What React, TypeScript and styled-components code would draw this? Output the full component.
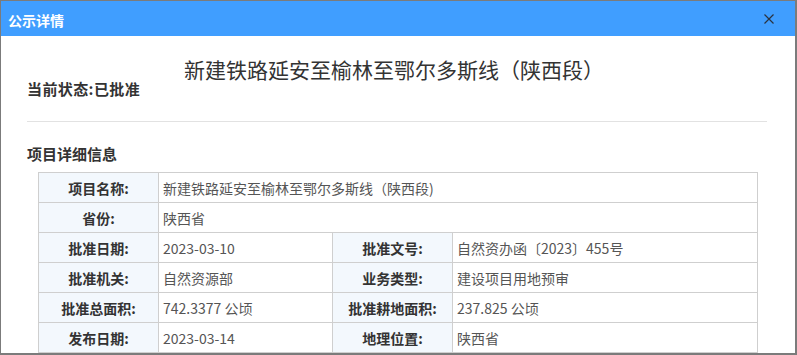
import React from "react";
import styled, { createGlobalStyle } from "styled-components";

const Global = createGlobalStyle`
  html, body { margin: 0; padding: 0; overflow: hidden; background: #fff; }
  * { box-sizing: border-box; }
`;

const Frame = styled.div`
  width: 797px;
  height: 355px;
  border: 1px solid #7b7b7b;
  border-right-width: 2px;
  border-bottom-width: 2px;
  overflow: hidden;
  display: flex;
  flex-direction: column;
  font-family: "Noto Sans CJK SC", "Noto Sans", sans-serif;
  background: #fff;
`;

const Header = styled.div`
  height: 35px;
  flex: none;
  background: #409eff;
  display: flex;
  align-items: center;
  justify-content: space-between;
  padding: 0 21px 0 7px;
`;

const HeaderTitle = styled.div`
  color: #fff;
  font-size: 14px;
  font-weight: 700;
  line-height: 16px;
  padding-top: 2px;
`;

const CloseButton = styled.button`
  width: 10px;
  height: 10px;
  padding: 0;
  border: none;
  background: transparent;
  display: flex;
  cursor: pointer;
`;

const Body = styled.div`
  flex: 1;
  overflow: hidden;
  padding: 0 28px 0 26px;
`;

const MainTitle = styled.h1`
  margin: 21px 0 0;
  text-align: center;
  font-size: 21px;
  line-height: 24px;
  font-weight: 400;
  color: #333;
  padding-right: 6px;
`;

const Status = styled.div`
  font-size: 15px;
  font-weight: 700;
  line-height: 16px;
  color: #333;
  letter-spacing: 0.4px;
`;

const Divider = styled.hr`
  margin: 24px 0 0;
  border: none;
  border-top: 1px solid #e2e2e2;
  height: 0;
`;

const SectionTitle = styled.h2`
  margin: 22px 0 0;
  font-size: 15px;
  font-weight: 700;
  line-height: 20px;
  color: #333;
`;

const Table = styled.table`
  margin: 8px 10px 0 11px;
  width: 719px;
  border-collapse: collapse;
  table-layout: fixed;
`;

const Row = styled.tr`
  height: 30px;
`;

const Label = styled.th`
  border: 1px solid #cfcfcf;
  background: #f3f8fd;
  font-size: 14px;
  font-weight: 700;
  color: #333;
  text-align: center;
  padding: 0;
  line-height: 28px;
`;

const Value = styled.td`
  border: 1px solid #cfcfcf;
  font-size: 14px;
  color: #555;
  padding: 0 4px;
  line-height: 28px;
  white-space: nowrap;
`;

type Pair = [string, string];
const rows: { cells: Pair[] }[] = [
  { cells: [["项目名称:", "新建铁路延安至榆林至鄂尔多斯线（陕西段)"]] },
  { cells: [["省份:", "陕西省"]] },
  { cells: [["批准日期:", "2023-03-10"], ["批准文号:", "自然资办函〔2023〕455号"]] },
  { cells: [["批准机关:", "自然资源部"], ["业务类型:", "建设项目用地预审"]] },
  { cells: [["批准总面积:", "742.3377 公顷"], ["批准耕地面积:", "237.825 公顷"]] },
  { cells: [["发布日期:", "2023-03-14"], ["地理位置:", "陕西省"]] },
];

export default function App() {
  return (
    <>
      <Global />
      <Frame>
        <Header>
          <HeaderTitle>公示详情</HeaderTitle>
          <CloseButton aria-label="关闭">
            <svg width="10" height="10" viewBox="0 0 10 10">
              <path d="M0.5 0.5 L9.5 9.5 M9.5 0.5 L0.5 9.5" stroke="#2b3340" strokeWidth="1.2" fill="none" />
            </svg>
          </CloseButton>
        </Header>
        <Body>
          <MainTitle>新建铁路延安至榆林至鄂尔多斯线（陕西段）</MainTitle>
          <Status>当前状态:已批准</Status>
          <Divider />
          <SectionTitle>项目详细信息</SectionTitle>
          <Table>
            <colgroup>
              <col style={{ width: 120 }} />
              <col style={{ width: 174 }} />
              <col style={{ width: 120 }} />
              <col style={{ width: 305 }} />
            </colgroup>
            <tbody>
              {rows.map((r, i) => (
                <Row key={i}>
                  {r.cells.map(([l, v], j) => (
                    <React.Fragment key={j}>
                      <Label>{l}</Label>
                      <Value colSpan={r.cells.length === 1 ? 3 : 1}>{v}</Value>
                    </React.Fragment>
                  ))}
                </Row>
              ))}
            </tbody>
          </Table>
        </Body>
      </Frame>
    </>
  );
}
